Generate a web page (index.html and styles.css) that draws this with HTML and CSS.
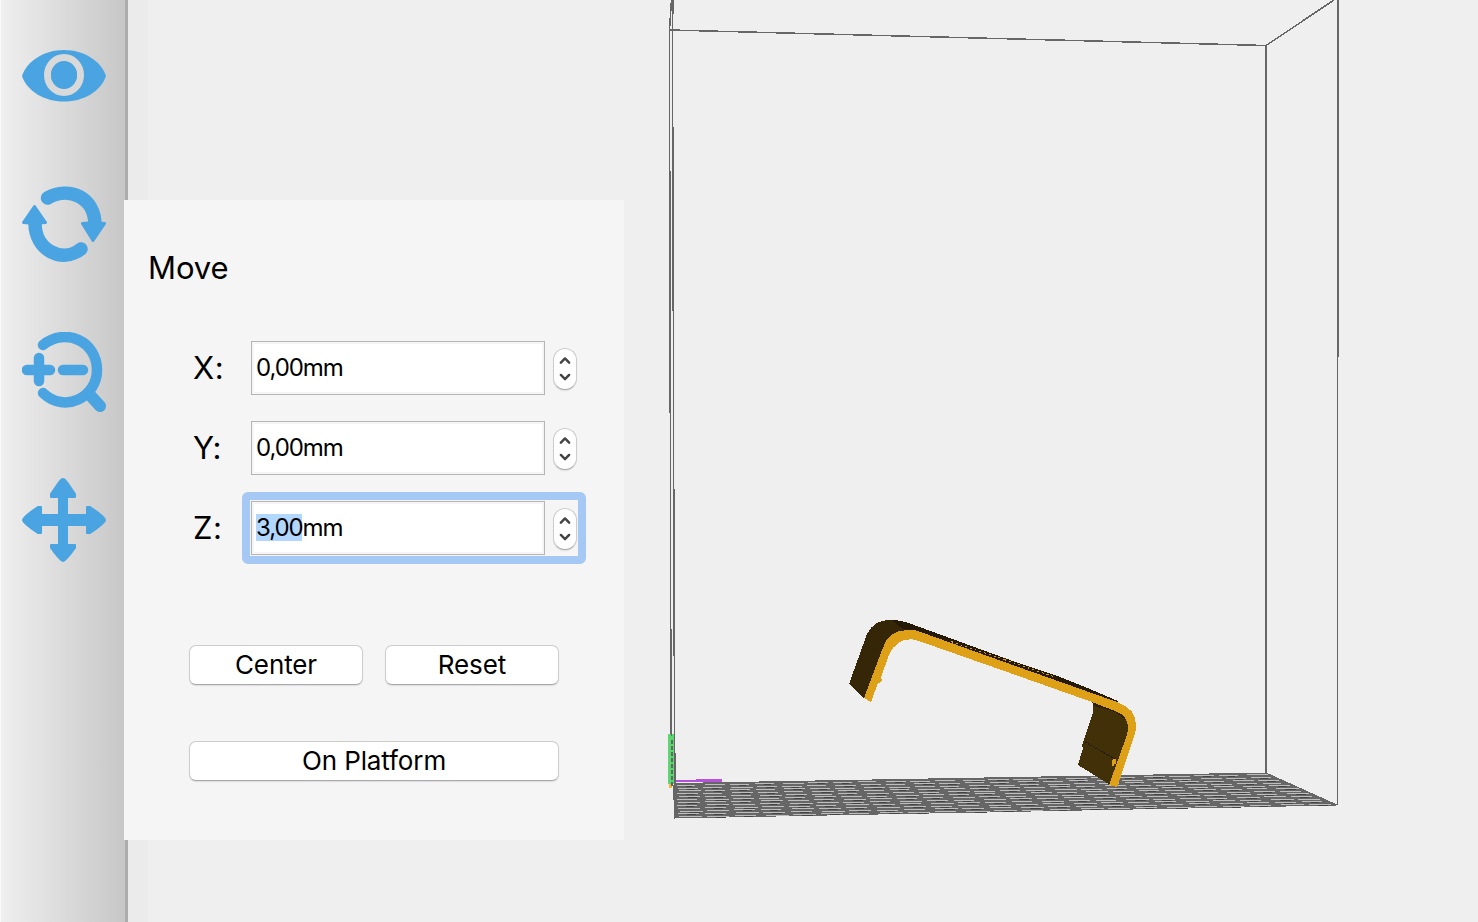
FILE: index.html
```html
<!DOCTYPE html>
<html lang="en">
<head>
<meta charset="utf-8">
<title>Move</title>
<link rel="stylesheet" href="styles.css">
</head>
<body>
<div class="app">
  <nav class="toolbar">
    <svg class="tool tool-view" viewBox="0 0 84 52"><path fill="currentColor" d="M0 26C5 11 22 0 42 0s37 11 42 26C79 41 62 51.500 42 51.500S5 41 0 26z"/><ellipse class="iris" cx="42" cy="25" rx="16.500" ry="17.500"/><ellipse cx="42" cy="25" rx="13" ry="13.500" fill="currentColor"/></svg>
    <svg class="tool tool-rotate" viewBox="0 0 84 76"><g class="stroke-thick"><path d="M25.500 12C47 0 73 11 73 39"/><path d="M13 37c0 27 27 41 46 26"/></g><path fill="currentColor" stroke="currentColor" stroke-width="3" stroke-linejoin="round" d="M12.500 20.500L23.500 36.500Q12.500 38 1.500 36.500zM71 54.500L60.500 37.500Q71.500 36 82.500 37.500z"/></svg>
    <svg class="tool tool-scale" viewBox="0 0 84 80"><g class="stroke-mid"><path d="M21 13C43-5 75 9 75 38c0 27-32 44-54 23"/><path d="M67 62l11 12" stroke-width="12"/><path d="M5 38h23M17 26v23M41 38h20"/></g></svg>
    <svg class="tool tool-move" viewBox="0 0 84 84"><path fill="currentColor" stroke="currentColor" stroke-width="2" stroke-linejoin="round" d="M41 1c2 0 4 3 12 15v3h-8v18h20v-8h3c12 8 15 11 15 13s-3 5-15 13h-3v-8H45v20h8v3C45 80 43 83 41 83s-4-3-12-13v-3h8V47H19v8h-3C4 47 1 44 1 42s3-5 15-13h3v8h18V19h-8v-3C37 4 39 1 41 1z"/></svg>
  </nav>
  <main class="viewport">
    <svg class="scene" viewBox="128 0 1350 922">
      <g class="frame" shape-rendering="crispEdges">
        <path d="M671.500 0L669.500 30L670 300L671 735M673 0L672.500 30L673.500 400L674.500 740L675 818M670 30L1266 45.500L1334 0M1266 45V773M1338 0L1337.500 805"/>
      </g>
      <g id="floor" shape-rendering="crispEdges"></g>
      <g shape-rendering="crispEdges">
        <path class="axis-y" d="M668 734h6v50h-6z"/>
        <path class="axis-z" d="M669 784h3v4h-3z"/>
        <path class="axis-x" d="M676 780h20v-1h26v3h-46z"/>
        <path class="axis-dash" d="M672 740v47"/>
        <path class="frame-line" d="M671.500 720v16M674.500 720v55M675.500 753v65M673 785v15M674 795v18"/>
      </g>
      <g shape-rendering="crispEdges">
        <path fill="#352607" d="M849 684L867 634C872 624 880 620 889 620C898 620 905 622 912 625L930 632L915 636L890 645L864 699z"/>
        <path fill="#251a08" d="M892 620C900 620 906 622 914 625L1010 660L1060 677L1090 689L1118 701V706L1010 668L915 634L900 627z"/>
        <path fill="#423008" d="M1092 698L1122 706L1131 720L1128 740L1112 786L1078 765L1083 748L1082 745L1092 716C1094 709 1094 706 1092 701z"/>
        <path fill="#302208" d="M1092 700L1118 708L1130 723L1115 712L1094 706z"/>
        <path fill="#dea016" d="M864 698L882 650C886 636 895 630 908 630L915 630L1010 664L1117 702C1131 707 1137 715 1136 729L1134 737L1117 787L1109 785L1127 735C1130 722 1126 715 1115 711L1092 702L1010 673L919 641C907 636 894 642 889 655L881 677L882 680L880 683L878 683L871 702z"/>
        <path class="top-edge" d="M951 641.500l53 18M1004 659.500l52 18"/>
        <path class="seam" d="M1085 742l30 17"/>
        <path fill="#dea016" d="M1113 759h3v5h-2v2h-2v-5z"/>
      </g>
    </svg>
  </main>
  <section class="panel">
    <h1 class="title">Move</h1>
    <div class="fields">
      <div class="field"><span class="label">X:</span><div class="spin"><div class="input">0,00mm</div><svg class="stepper" viewBox="0 0 24 42"><path d="M7.500 14l4.500-4.500 4.500 4.500M7.500 27.500l4.500 4.500 4.500-4.500"/></svg></div></div>
      <div class="field"><span class="label">Y:</span><div class="spin"><div class="input">0,00mm</div><svg class="stepper" viewBox="0 0 24 42"><path d="M7.500 14l4.500-4.500 4.500 4.500M7.500 27.500l4.500 4.500 4.500-4.500"/></svg></div></div>
      <div class="field"><span class="label">Z:</span><div class="spin focused"><div class="input"><span class="selected">3,00</span>mm</div><svg class="stepper" viewBox="0 0 24 42"><path d="M7.500 14l4.500-4.500 4.500 4.500M7.500 27.500l4.500 4.500 4.500-4.500"/></svg></div></div>
    </div>
    <div class="actions">
      <button class="button">Center</button>
      <button class="button">Reset</button>
      <button class="button wide">On Platform</button>
    </div>
  </section>
</div>
<script src="floor.js"></script>
</body>
</html>
```
FILE: styles.css
```css
* { box-sizing: border-box; }
body { margin: 0; background: #efefef; font-family: Inter, "Liberation Sans", sans-serif; color: #000; }
.app { position: relative; display: flex; width: 1478px; height: 922px; overflow: hidden; }
.toolbar { width: 128px; flex: none; display: flex; flex-direction: column; align-items: flex-start; padding: 50px 0 0 22px; color: #4aa4e1; background: linear-gradient(90deg, #fafafa 0 1px, #efefef 1px, #c7c7c7 125px, #adadad 125px); }
.tool { display: block; width: 84px; flex: none; }
.tool-view { height: 52px; }
.iris { fill: none; stroke: #d9d9d9; stroke-width: 7px; }
.tool-rotate { height: 76px; margin-top: 84px; }
.tool-scale { height: 80px; margin-top: 70px; }
.tool-move { height: 84px; margin-top: 66px; }
.stroke-thick { fill: none; stroke: currentColor; stroke-width: 13.5px; stroke-linecap: round; }
.stroke-mid { fill: none; stroke: currentColor; stroke-width: 10.5px; stroke-linecap: round; }
.viewport { flex: 1; background: linear-gradient(90deg, #ebebeb 20px, #efefef 20px); }
.scene { display: block; width: 1350px; height: 922px; }
.frame path { fill: none; stroke: #666; stroke-width: 1.5px; }
.floor-base { fill: #666; stroke: #666; stroke-width: 1px; }
.floor-gap { stroke: #bdbdbd; stroke-width: 1px; }
.floor-dark { stroke: #444; stroke-width: 1px; }
.floor-line { stroke: #666; stroke-width: 1px; }
.axis-y { fill: #5bd670; }
.axis-z { fill: #f5b82e; }
.axis-x { fill: #b452df; }
.axis-dash { stroke: #666; stroke-width: 2px; stroke-dasharray: 4 2; }
.frame-line { stroke: #666; stroke-width: 1px; }
.top-edge { stroke: #dea016; stroke-width: 1px; stroke-dasharray: 2 3; }
.seam { stroke: #211806; stroke-width: 1px; stroke-dasharray: 2 1; }
.panel { position: absolute; left: 124px; top: 200px; width: 500px; height: 640px; background: #f5f5f5; }
.title { margin: 0; padding: 48px 0 0 24px; height: 132px; font-size: 31px; line-height: 40px; font-weight: 400; letter-spacing: -.1px; }
.fields { display: flex; flex-direction: column; }
.field { display: flex; align-items: center; height: 72px; margin-bottom: 8px; }
.label { width: 118px; padding-left: 69px; flex: none; font-size: 31px; line-height: 40px; letter-spacing: .5px; }
.spin { display: flex; align-items: center; gap: 8px; width: 344px; height: 72px; padding-left: 9px; }
.focused { border: 8px solid #a5c8f5; border-radius: 6px; padding-left: 1px; }
.input { width: 294px; height: 54px; border: 1px solid #b5b5b5; box-shadow: inset 0 0 0 2px #f5f5f5; background: #fff; padding-left: 4px; display: flex; align-items: center; font-size: 24px; line-height: 27px; padding-bottom: 1px; letter-spacing: -1.1px; white-space: pre; }
.selected { background: #b2d7ff; }
.stepper { width: 24px; height: 42px; margin-top: 2px; border: 1px solid #ccc; border-bottom-color: #aaa; border-radius: 12px; background: #fff; box-shadow: 0 1px 1px #ddd; flex: none; }
.stepper path { fill: none; stroke: #444; stroke-width: 2.7px; stroke-linecap: round; stroke-linejoin: round; }
.actions { display: grid; grid-template-columns: 174px 174px; column-gap: 22px; row-gap: 56px; padding: 73px 0 0 65px; }
.button { height: 40px; border: 1px solid #ccc; border-bottom-color: #aaa; border-radius: 7px; background: #fff; box-shadow: 0 1px 1px #ddd; font: 26px/36px Inter, "Liberation Sans", sans-serif; padding: 0; color: #000; letter-spacing: -.1px; }
.wide { grid-column: span 2; }
```
FILE: floor.js
```javascript
const floor = document.getElementById('floor');
// Corners of the build plate: far edge and near edge.
const far = [[675, 783.5], [1266, 773]];
const near = [[675, 818], [1337, 805]];
const mix = (a, b, t) => [a[0] + (b[0] - a[0]) * t, a[1] + (b[1] - a[1]) * t];
const at = (u, v) => mix(mix(far[0], far[1], u), mix(near[0], near[1], u), v);

function add(tag, cls, attrs) {
  const el = document.createElementNS('http://www.w3.org/2000/svg', tag);
  el.setAttribute('class', cls);
  for (const key in attrs) el.setAttribute(key, attrs[key]);
  floor.appendChild(el);
}
function line(cls, x1, y1, x2, y2) {
  add('line', cls, { x1, y1, x2, y2 });
}

add('polygon', 'floor-base', { points: [far[0], far[1], near[1], near[0]].join(' ') });
const rows = 12;
const columns = 23;
for (let r = 0; r < rows; r++) {
  const v = (r + 0.6) / rows;
  for (let c = 0; c < columns; c++) {
    const shift = ((c * 5 + r * 3) % 7) / 30;
    const a = at((c + 0.06 + shift / 2) / columns, v);
    const b = at((c + 0.78 + shift) / columns, v);
    const y = Math.floor(a[1]) + 0.5;
    line('floor-gap', a[0], y, b[0], y);
    if ((c + r * 2) % 3 !== 1) line('floor-dark', a[0] + 9, y + 1, b[0] - 3, y + 1);
  }
}
for (let c = 1; c < columns; c++) {
  const a = at(c / columns, 0);
  const b = at(c / columns, 1);
  line('floor-line', a[0], a[1], b[0], b[1]);
}
```
